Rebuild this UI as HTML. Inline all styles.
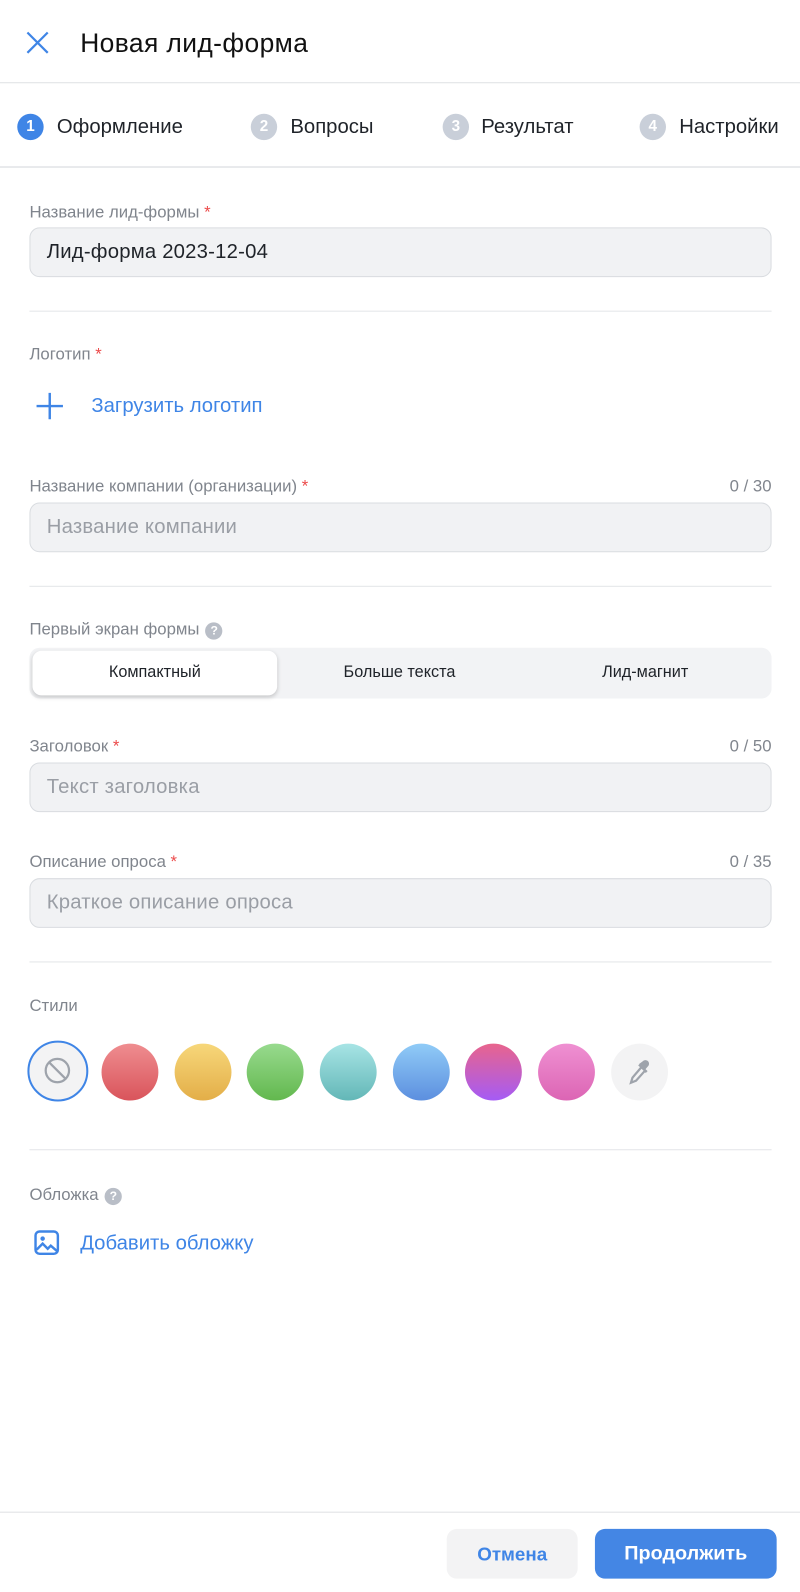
<!DOCTYPE html>
<html><head><meta charset="utf-8"><style>
*{box-sizing:border-box;margin:0;padding:0}
html,body{width:800px;height:1591px;overflow:hidden;background:#fff}
#w{position:absolute;left:0;top:0;width:788px;height:1568px;transform:scale(1.01523);transform-origin:0 0;font-family:"Liberation Sans","Noto Sans CJK SC",sans-serif;color:#1f2329}
.a{position:absolute}
.hr{position:absolute;left:29px;width:731px;height:1px;background:#e3e5e8}
.lbl{position:absolute;left:29px;font-size:16.5px;color:#80858d;line-height:18px}
.lbl b{color:#ec4b4b;font-weight:normal}
.cnt{position:absolute;right:28px;font-size:16.5px;color:#80858d;line-height:18px}
.inp{position:absolute;left:29px;width:731px;height:49px;background:#f1f2f4;border:1px solid #d9dce0;border-radius:10px;font-size:20px;line-height:47px;padding-left:16px;color:#9a9ea5;letter-spacing:.2px}
.step{position:absolute;top:112px;width:26px;height:26px;border-radius:50%;background:#c9cfd9;color:#fff;font-size:15px;font-weight:bold;text-align:center;line-height:26px}
.st{position:absolute;top:113px;font-size:20px;line-height:24px;color:#1f2329}
.c{position:absolute;top:1028px;width:56px;height:56px;border-radius:50%}
.q{display:inline-block;width:17px;height:17px;border-radius:50%;background:#b9bec7;color:#fff;font-size:12px;font-weight:bold;text-align:center;line-height:17px;vertical-align:0px;margin-left:6px}
.seg{position:absolute;top:641px;height:44px;line-height:44px;font-size:16px;color:#1f2329;text-align:center;width:241px}
</style></head><body><div id="w">
<svg class="a" style="left:25px;top:30px" width="24" height="24" viewBox="0 0 24 24"><path d="M2 2L22 22M22 2L2 22" stroke="#3f85e6" stroke-width="2.2" fill="none"/></svg>
<div class="a" style="left:79px;top:27px;font-size:26px;font-weight:500;line-height:30px;color:#111;letter-spacing:.4px">Новая лид-форма</div>
<div class="a" style="left:0;top:81px;width:788px;height:1px;background:#dfe1e4"></div>
<div class="step" style="left:17px;background:#3f85e6">1</div><div class="st" style="left:56px">Оформление</div>
<div class="step" style="left:247px">2</div><div class="st" style="left:286px">Вопросы</div>
<div class="step" style="left:436px">3</div><div class="st" style="left:474px">Результат</div>
<div class="step" style="left:630px">4</div><div class="st" style="left:669px">Настройки</div>
<div class="a" style="left:0;top:164px;width:788px;height:1px;background:#d3d6db"></div>

<div class="lbl" style="top:200px">Название лид-формы <b>*</b></div>
<div class="inp" style="top:224px;color:#1f2329">Лид-форма 2023-12-04</div>
<div class="hr" style="top:306px"></div>
<div class="lbl" style="top:340px">Логотип <b>*</b></div>
<svg class="a" style="left:35px;top:386px" width="28" height="28" viewBox="0 0 28 28"><path d="M14 1V27M1 14H27" stroke="#3f85e6" stroke-width="2.4"/></svg>
<div class="a" style="left:90px;top:388px;font-size:20px;color:#3f85e6;line-height:24px">Загрузить логотип</div>

<div class="lbl" style="top:470px">Название компании (организации) <b>*</b></div><div class="cnt" style="top:470px">0 / 30</div>
<div class="inp" style="top:495px">Название компании</div>
<div class="hr" style="top:577px"></div>
<div class="lbl" style="top:611px">Первый экран формы<span class="q">?</span></div>
<div class="a" style="left:29px;top:638px;width:731px;height:50px;background:#f2f3f5;border-radius:10px"></div>
<div class="a" style="left:32px;top:641px;width:241px;height:44px;background:#fff;border-radius:9px;box-shadow:0 2px 4px rgba(0,0,0,.18)"></div>
<div class="seg" style="left:32px">Компактный</div>
<div class="seg" style="left:273px">Больше текста</div>
<div class="seg" style="left:515px">Лид-магнит</div>

<div class="lbl" style="top:726px">Заголовок <b>*</b></div><div class="cnt" style="top:726px">0 / 50</div>
<div class="inp" style="top:751px">Текст заголовка</div>
<div class="lbl" style="top:840px">Описание опроса <b>*</b></div><div class="cnt" style="top:840px">0 / 35</div>
<div class="inp" style="top:865px">Краткое описание опроса</div>
<div class="hr" style="top:947px"></div>
<div class="lbl" style="top:982px">Стили</div>
<div class="c" style="left:27px;top:1025px;width:60px;height:60px;border:2.5px solid #3f85e6;background:#f3f3f4"><svg style="position:absolute;left:14px;top:14px" width="27" height="27" viewBox="0 0 27 27"><circle cx="13.5" cy="13.5" r="11.5" stroke="#9ea3ab" stroke-width="2.2" fill="none"/><path d="M5.5 5.5L21.5 21.5" stroke="#9ea3ab" stroke-width="2.2"/></svg></div>
<div class="c" style="left:100px;background:linear-gradient(#ef8d90,#d9545b)"></div>
<div class="c" style="left:172px;background:linear-gradient(#f7d77a,#e3ae48)"></div>
<div class="c" style="left:243px;background:linear-gradient(#98da8e,#62b84e)"></div>
<div class="c" style="left:315px;background:linear-gradient(#a7e4e5,#63b7b7)"></div>
<div class="c" style="left:387px;background:linear-gradient(#90cbf7,#5c8fdf)"></div>
<div class="c" style="left:458px;background:linear-gradient(#e8648d,#a55bf5)"></div>
<div class="c" style="left:530px;background:linear-gradient(#ef90d2,#dc65b4)"></div>
<div class="c" style="left:602px;background:#f3f3f4"><svg style="position:absolute;left:14px;top:13px" width="28" height="30" viewBox="0 0 28 30"><path d="M17 4.5a3.5 3.5 0 0 1 5.5 4.5l-3 3.5-6-5.5z" fill="#9ea3ab"/><path d="M13.5 7.5l7.5 7.5" stroke="#9ea3ab" stroke-width="2.5"/><path d="M15.5 10.5L7 20.5l-1.5 5 5-2 8.5-9.5" stroke="#9ea3ab" stroke-width="2.2" fill="none"/></svg></div>
<div class="hr" style="top:1132px"></div>
<div class="lbl" style="top:1168px">Обложка<span class="q">?</span></div>
<svg class="a" style="left:33px;top:1211px" width="26" height="26" viewBox="0 0 26 26"><rect x="2" y="2" width="22" height="22" rx="4" stroke="#3f85e6" stroke-width="2.4" fill="none"/><circle cx="9" cy="9" r="2.2" fill="#3f85e6"/><path d="M3 20l6-6 5 5 3-3 7 6" stroke="#3f85e6" stroke-width="2.4" fill="none"/></svg>
<div class="a" style="left:79px;top:1213px;font-size:20px;color:#3f85e6;line-height:24px">Добавить обложку</div>

<div class="a" style="left:0;top:1489px;width:788px;height:1px;background:#dfe1e4"></div>
<div class="a" style="left:440px;top:1506px;width:129px;height:49px;background:#f3f3f4;border-radius:10px;color:#3f85e6;font-weight:bold;font-size:18.5px;text-align:center;line-height:49px">Отмена</div>
<div class="a" style="left:586px;top:1506px;width:179px;height:49px;background:#4486e4;border-radius:10px;color:#fff;font-weight:bold;font-size:19.5px;text-align:center;line-height:49px">Продолжить</div>
</div></body></html>
